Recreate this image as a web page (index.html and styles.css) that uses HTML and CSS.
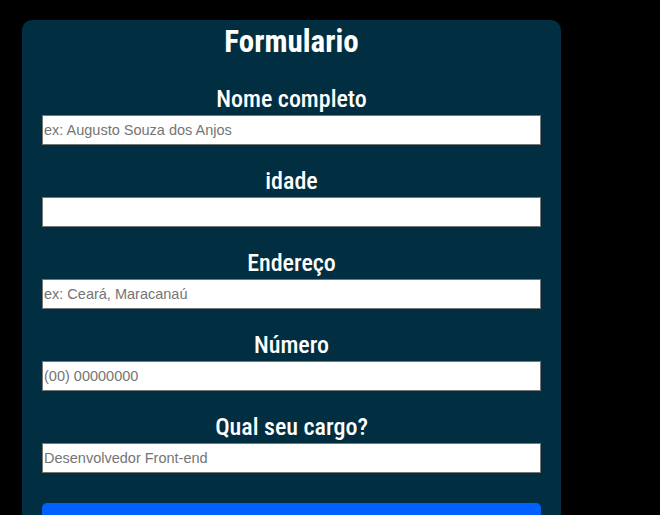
FILE: index.html
```html
<!DOCTYPE html>
<html lang="pt-BR">
<head>
<meta charset="utf-8">
<title>Formulario</title>
<link rel="stylesheet" href="styles.css">
</head>
<body>
<main class="card">
  <h1 class="title">Formulario</h1>
  <form class="form">
    <label class="field">
      <span class="label">Nome completo</span>
      <input class="input" type="text" placeholder="ex: Augusto Souza dos Anjos">
    </label>
    <label class="field">
      <span class="label">idade</span>
      <input class="input" type="text">
    </label>
    <label class="field">
      <span class="label">Endereço</span>
      <input class="input" type="text" placeholder="ex: Ceará, Maracanaú">
    </label>
    <label class="field">
      <span class="label">Número</span>
      <input class="input" type="text" placeholder="(00) 00000000">
    </label>
    <label class="field">
      <span class="label">Qual seu cargo?</span>
      <input class="input" type="text" placeholder="Desenvolvedor Front-end">
    </label>
    <button class="button" type="button">Enviar</button>
  </form>
</main>
</body>
</html>
```
FILE: styles.css
```css
html, body {
  margin: 0;
  padding: 0;
  background: #000;
  overflow: hidden;
}
body {
  padding: 20px 0 0 22px;
  font-family: "Roboto Condensed", "DejaVu Sans Condensed", sans-serif;
}
.card {
  width: 539px;
  box-sizing: border-box;
  background: #022e41;
  border-radius: 10px;
  padding: 4px 20px 40px;
}
.title {
  margin: 0;
  font-size: 31px;
  line-height: 36px;
  font-weight: 700;
  color: #fff;
  text-align: center;
}
.form {
  display: flex;
  flex-direction: column;
  gap: 20px;
  margin-top: 23px;
}
.field {
  display: flex;
  flex-direction: column;
  gap: 2px;
}
.label {
  font-size: 24px;
  line-height: 30px;
  font-weight: 500;
  color: #fff;
  text-align: center;
  padding-top: 1px;
  margin-bottom: -1px;
}
.input {
  display: block;
  width: 499px;
  height: 30px;
  box-sizing: border-box;
  margin: 0;
  padding: 0 0 0 1px;
  border: 1px solid #767676;
  background: #fff;
  font-family: "Liberation Sans", Arial, sans-serif;
  font-size: 14.5px;
  color: #222;
}
.input::placeholder {
  color: #757575;
}
.button {
  margin-top: 10px;
  width: 499px;
  height: 40px;
  border: 0;
  border-radius: 5px;
  background: #0061ff;
  color: #fff;
  font-family: inherit;
  font-weight: 700;
  font-size: 24px;
  line-height: 28px;
  padding: 10px 0 0;
  display: flex;
  justify-content: center;
  align-items: flex-start;
}
```
